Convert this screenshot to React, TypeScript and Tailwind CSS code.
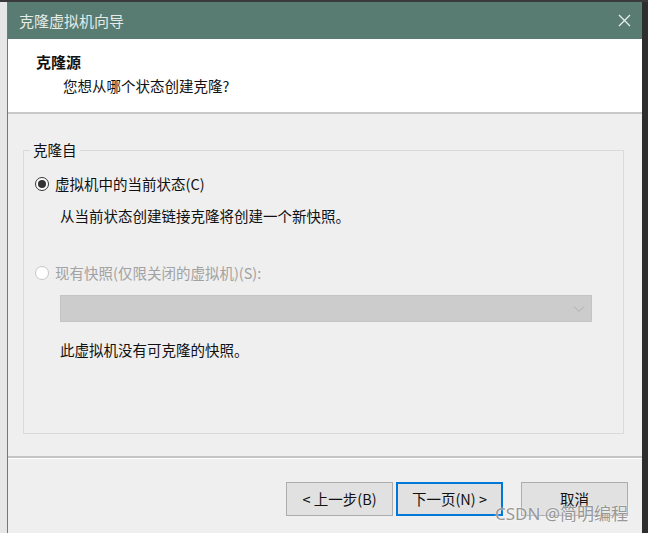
import React from "react";

function Radio({ checked, disabled }: { checked?: boolean; disabled?: boolean }) {
  return (
    <span
      className={`flex items-center justify-center w-[14px] h-[14px] rounded-full border ${
        disabled ? "border-[#c6c6c6] bg-white" : "border-[#333333] bg-white"
      }`}
    >
      {checked && <span className="w-[8px] h-[8px] rounded-full bg-[#333333]" />}
    </span>
  );
}

function Btn({ children, primary }: { children: React.ReactNode; primary?: boolean }) {
  return (
    <div
      className={`w-[107px] h-[34px] flex items-center justify-center bg-[#e1e1e1] text-[14.5px] text-[#111] ${
        primary ? "border-2 border-[#0078d7]" : "border border-[#adadad]"
      }`}
    >
      {children}
    </div>
  );
}

export default function App() {
  return (
    <div className="w-[648px] h-[533px] flex flex-col bg-[#2e2e2e] overflow-hidden font-['Noto_Sans_CJK_SC','Noto_Sans',sans-serif]">
      <div className="h-[2px] bg-[#3a3a3a]" />
      <div className="flex flex-1 min-h-0">
        <div className="w-[7px] bg-[#e7e7e7]" />
        <div className="w-[635px] flex flex-col border-l border-[#5f8379] bg-[#efefef]">
          {/* title bar */}
          <div className="h-[37px] flex items-center justify-between bg-[#587c72] pl-[11px] pr-[11px]">
            <span className="text-[15px] leading-[20px] text-[#e4ebe8]">克隆虚拟机向导</span>
            <svg width="13" height="13" viewBox="0 0 13 13">
              <path d="M1 1 L12 12 M12 1 L1 12" stroke="#e8eeeb" strokeWidth="1.3" fill="none" />
            </svg>
          </div>
          {/* header */}
          <div className="h-[73px] bg-white flex flex-col pl-[28px] pt-[13px]">
            <span className="text-[15px] leading-[20px] font-bold text-[#111]">克隆源</span>
            <span className="ml-[27px] mt-[4px] text-[14.5px] leading-[20px] text-[#111]">
              您想从哪个状态创建克隆?
            </span>
          </div>
          <div className="h-[2px] bg-[#c8c8c8]" />
          {/* body */}
          <div className="relative flex-1 flex flex-col">
            <fieldset className="mt-[27px] ml-[15px] w-[601px] border border-[#dadada] pb-[73px]">
              <legend className="ml-[6px] px-[3px] text-[14.5px] leading-[18px] text-[#111]">克隆自</legend>
              <div className="pl-[11px] flex flex-col">
                <div className="mt-[15px] h-[20px] flex items-center gap-[6px]">
                  <Radio checked />
                  <span className="text-[14.5px] leading-[20px] text-[#111]">虚拟机中的当前状态(C)</span>
                </div>
                <div className="mt-[12px] ml-[25px] h-[20px] text-[14.5px] leading-[20px] text-[#111]">
                  从当前状态创建链接克隆将创建一个新快照。
                </div>
                <div className="mt-[37px] h-[20px] flex items-center gap-[6px]">
                  <Radio disabled />
                  <span className="text-[14.5px] leading-[20px] text-[#a2a2a2]">现有快照(仅限关闭的虚拟机)(S):</span>
                </div>
                <div className="mt-[12px] ml-[25px] w-[532px] h-[27px] bg-[#cccccc] border border-[#c4c4c4] flex items-center justify-end pr-[6px]">
                  <svg width="12" height="8" viewBox="0 0 12 8">
                    <path d="M1 1.5 L6 6.5 L11 1.5" stroke="#b0b0b0" strokeWidth="1" fill="none" />
                  </svg>
                </div>
                <div className="mt-[18px] ml-[25px] h-[20px] text-[14.5px] leading-[20px] text-[#111]">
                  此虚拟机没有可克隆的快照。
                </div>
              </div>
            </fieldset>
            <div className="mt-[22px] h-[2px] bg-[#c4c4c4]" />
            <div className="h-[1px] bg-white" />
            <div className="mt-[23px] flex justify-end pr-[14px]">
              <Btn>&lt; 上一步(B)</Btn>
              <div className="w-[3px]" />
              <Btn primary>下一页(N) &gt;</Btn>
              <div className="w-[18px]" />
              <Btn>取消</Btn>
            </div>
            <div className="absolute left-[487px] top-[389px] text-[17px] leading-[22px] text-[#979797] font-['Noto_Sans','Noto_Sans_CJK_SC',sans-serif] [text-shadow:0_0_2px_#ffffff]">
              CSDN @简明编程
            </div>
          </div>
        </div>
      </div>
    </div>
  );
}
